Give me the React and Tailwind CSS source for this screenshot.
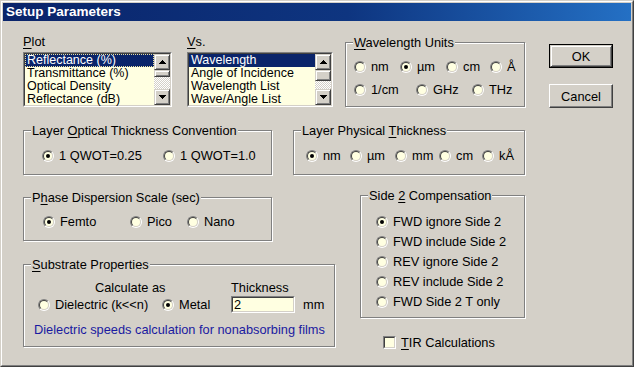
import React from 'react'

const Radio = ({ checked }) => (
  <span className="block w-[12px] h-[12px] shrink-0 rounded-full border border-t-[#808080] border-l-[#808080] border-b-white border-r-white">
    <span className="flex w-full h-full items-center justify-center rounded-full border border-t-[#404040] border-l-[#404040] border-b-[#d4d0c8] border-r-[#d4d0c8] bg-[#ffffe1]">
      {checked && <span className="block w-[4px] h-[4px] rounded-full bg-black" />}
    </span>
  </span>
)

const RadioItem = ({ checked, label, className = '' }) => (
  <div className={`flex items-center h-[15px] shrink-0 ${className}`}>
    <Radio checked={checked} />
    <span className="ml-[5px] leading-[15px] whitespace-nowrap">{label}</span>
  </div>
)

const GroupBox = ({ title, className = '', children }) => (
  <div className={`relative shrink-0 border border-[#808080] shadow-[inset_1px_1px_0_#fff,1px_1px_0_#fff] ${className}`}>
    <span className="absolute top-[-8px] left-[7px] px-[1px] bg-[#d4d0c8] leading-[15px] whitespace-nowrap">{title}</span>
    {children}
  </div>
)

const Sunken = ({ className = '', children }) => (
  <div className={`border border-t-[#808080] border-l-[#808080] border-b-white border-r-white ${className}`}>
    <div className="w-full h-full border border-t-[#404040] border-l-[#404040] border-b-[#d4d0c8] border-r-[#d4d0c8] bg-[#ffffe1]">
      {children}
    </div>
  </div>
)

const Raised = ({ className = '', children }) => (
  <div className={`border border-t-[#d4d0c8] border-l-[#d4d0c8] border-b-[#404040] border-r-[#404040] shadow-[inset_1px_1px_0_#fff,inset_-1px_-1px_0_#808080] bg-[#d4d0c8] ${className}`}>
    {children}
  </div>
)

const Arrow = ({ up }) => (
  <svg width="7" height="4" viewBox="0 0 7 4" shapeRendering="crispEdges">
    <path
      d={up
        ? 'M3 0h1v1h-1z M2 1h3v1h-3z M1 2h5v1h-5z M0 3h7v1h-7z'
        : 'M0 0h7v1h-7z M1 1h5v1h-5z M2 2h3v1h-3z M3 3h1v1h-1z'}
      fill="#000"
    />
  </svg>
)

const ListBox = ({ items, focus, thumb, className = '' }) => (
  <Sunken className={`h-[55px] ${className}`}>
    <div className="flex h-full">
      <div className="flex-1 min-w-0 text-[12.5px]">
        {items.map((item, i) => (
          <div
            key={item}
            className={
              i === 0
                ? `h-[13px] leading-[11px] px-[1px] bg-[#0a246a] text-white whitespace-nowrap border ${focus ? 'border-dotted border-[#e8e0a0]' : 'border-transparent'}`
                : 'h-[13px] leading-[13px] px-[2px] whitespace-nowrap'
            }
          >
            {item}
          </div>
        ))}
      </div>
      <div className="w-[16px] flex flex-col">
        <Raised className="h-[16px] flex items-center justify-center"><Arrow up /></Raised>
        <Raised className={thumb} />
        <div className="flex-1 bg-[image:repeating-conic-gradient(#fff_0_25%,#d4d0c8_0_50%)] bg-[length:2px_2px]" />
        <Raised className="h-[16px] flex items-center justify-center"><Arrow /></Raised>
      </div>
    </div>
  </Sunken>
)

const Btn = ({ label, isDefault }) => (
  isDefault ? (
    <div className="w-[64px] h-[24px] border border-black">
      <Raised className="w-full h-full flex items-center justify-center leading-[15px]">{label}</Raised>
    </div>
  ) : (
    <div className="w-[64px] h-[24px] flex items-center justify-center leading-[15px] border border-t-white border-l-white border-b-[#404040] border-r-[#404040] shadow-[inset_-1px_-1px_0_#808080]">
      {label}
    </div>
  )
)

const U = ({ children }) => <span className="underline underline-offset-2">{children}</span>

export default function App() {
  return (
    <div className="w-[634px] h-[367px] border border-t-[#d4d0c8] border-l-[#d4d0c8] border-b-[#404040] border-r-[#404040] font-['Liberation_Sans',Arial,sans-serif] text-[12.8px] text-black">
      <div className="h-full flex flex-col p-[1px] bg-[#d4d0c8] border border-t-white border-l-white border-b-[#808080] border-r-[#808080]">
        <div className="h-[18px] shrink-0 flex items-center pl-[3px] bg-[linear-gradient(to_right,#0a246a,#0e3580_55%,#2470c4)] text-white font-bold text-[13.5px]">
          Setup Parameters
        </div>

        <div className="pl-[20px] pt-[13px]">
          {/* top row */}
          <div className="flex items-start">
            <div className="w-[149px] shrink-0">
              <div className="leading-[15px]"><U>P</U>lot</div>
              <ListBox
                className="mt-[3px]"
                focus
                thumb="h-[7px]"
                items={['Reflectance (%)', 'Transmittance (%)', 'Optical Density', 'Reflectance (dB)']}
              />
            </div>
            <div className="w-[146px] shrink-0 ml-[15px]">
              <div className="leading-[15px]"><U>V</U>s.</div>
              <ListBox
                className="mt-[3px]"
                thumb="h-[11px]"
                items={['Wavelength', 'Angle of Incidence', 'Wavelength List', 'Wave/Angle List']}
              />
            </div>
            <GroupBox title={<><U>W</U>avelength Units</>} className="ml-[12px] mt-[8px] w-[180px] h-[65px] pt-[16px] pl-[8px]">
              <div className="flex">
                <RadioItem label="nm" className="w-[46px]" />
                <RadioItem label="µm" checked className="w-[46px]" />
                <RadioItem label="cm" className="w-[44px]" />
                <RadioItem label="Å" />
              </div>
              <div className="flex mt-[8px]">
                <RadioItem label="1/cm" className="w-[62px]" />
                <RadioItem label="GHz" className="w-[56px]" />
                <RadioItem label="THz" />
              </div>
            </GroupBox>
            <div className="ml-[24px] mt-[10px] flex flex-col gap-[16px]">
              <Btn label="OK" isDefault />
              <Btn label="Cancel" />
            </div>
          </div>

          {/* thickness row */}
          <div className="flex mt-[22px]">
            <GroupBox title={<>Layer <U>O</U>ptical Thickness Convention</>} className="w-[249px] h-[45px] pt-[17px] pl-[18px]">
              <div className="flex">
                <RadioItem label="1 QWOT=0.25" checked className="w-[121px]" />
                <RadioItem label="1 QWOT=1.0" />
              </div>
            </GroupBox>
            <GroupBox title={<>Layer Physical <U>T</U>hickness</>} className="ml-[21px] w-[232px] h-[45px] pt-[17px] pl-[12px]">
              <div className="flex">
                <RadioItem label="nm" checked className="w-[44px]" />
                <RadioItem label="µm" className="w-[45px]" />
                <RadioItem label="mm" className="w-[44px]" />
                <RadioItem label="cm" className="w-[43px]" />
                <RadioItem label="kÅ" />
              </div>
            </GroupBox>
          </div>

          {/* lower area */}
          <div className="flex items-start">
            <div className="w-[312px] shrink-0">
              <GroupBox title={<>P<U>h</U>ase Dispersion Scale (sec)</>} className="mt-[22px] w-[249px] h-[44px] pt-[16px] pl-[19px]">
                <div className="flex">
                  <RadioItem label="Femto" checked className="w-[87px]" />
                  <RadioItem label="Pico" className="w-[57px]" />
                  <RadioItem label="Nano" />
                </div>
              </GroupBox>
              <GroupBox title={<><U>S</U>ubstrate Properties</>} className="mt-[23px] w-[312px] h-[83px] pt-[15px]">
                <div className="flex h-[15px] leading-[15px]">
                  <span className="w-[207px] pl-[71px] shrink-0">Calculate as</span>
                  <span>Thickness</span>
                </div>
                <div className="flex items-center h-[17px] mt-[1px]">
                  <div className="w-[207px] shrink-0 flex pl-[14px]">
                    <RadioItem label="Dielectric (k<<n)" className="w-[124px]" />
                    <RadioItem label="Metal" checked />
                  </div>
                  <Sunken className="w-[64px] h-[17px] shrink-0">
                    <div className="pl-[1px] leading-[13px]">2</div>
                  </Sunken>
                  <span className="ml-[8px] leading-[15px]">mm</span>
                </div>
                <div className="mt-[9px] pl-[10px] leading-[15px] text-[#1a1aa0] whitespace-nowrap">
                  Dielectric speeds calculation for nonabsorbing films
                </div>
              </GroupBox>
            </div>
            <div className="ml-[25px]">
              <GroupBox title={<>Side <U>2</U> Compensation</>} className="mt-[20px] w-[165px] h-[123px] pt-[18px] pl-[15px]">
                <div className="flex flex-col gap-[5px]">
                  <RadioItem label="FWD ignore Side 2" checked />
                  <RadioItem label="FWD include Side 2" />
                  <RadioItem label="REV ignore Side 2" />
                  <RadioItem label="REV include Side 2" />
                  <RadioItem label="FWD Side 2 T only" />
                </div>
              </GroupBox>
              <div className="mt-[17px] ml-[23px] flex items-center h-[15px]">
                <Sunken className="w-[13px] h-[13px] shrink-0" />
                <span className="ml-[5px] leading-[15px]"><U>T</U>IR Calculations</span>
              </div>
            </div>
          </div>
        </div>
      </div>
    </div>
  )
}
